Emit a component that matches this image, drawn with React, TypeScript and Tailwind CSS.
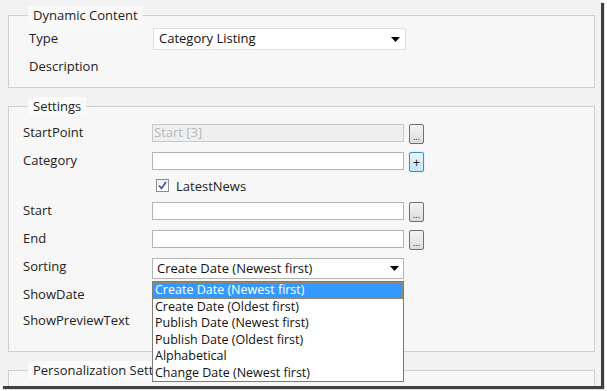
const font = "font-['Open_Sans','Liberation_Sans',sans-serif]";

const sortOptions = [
  "Create Date (Newest first)",
  "Create Date (Oldest first)",
  "Publish Date (Newest first)",
  "Publish Date (Oldest first)",
  "Alphabetical",
  "Change Date (Newest first)",
];

const Arrow = () => (
  <svg width="9" height="5" viewBox="0 0 9 5" className="shrink-0">
    <path d="M0 0h9L4.5 5z" fill="#000" />
  </svg>
);

const DotsButton = () => (
  <div className="ml-[5px] flex h-[20px] w-[15px] shrink-0 items-end justify-center rounded-[2px] border border-[#707070] bg-gradient-to-b from-[#f4f4f4] to-[#dcdcdc] pb-[2px] text-[9px] leading-none text-[#222]">
    ...
  </div>
);

const Row = ({ label, children }: { label: string; children?: React.ReactNode }) => (
  <div className="flex h-[28px] items-start">
    <div className="w-[129px] shrink-0 text-[13px] leading-[16px] text-[#222]">{label}</div>
    {children}
  </div>
);

const TextBox = ({ disabled, value }: { disabled?: boolean; value?: string }) => (
  <div
    className={
      disabled
        ? "flex h-[18px] w-[252px] items-center border border-[#c8c8c8] bg-[#efefef] px-[1px] text-[13px] text-[#b8b8b8]"
        : "h-[18px] w-[252px] border border-[#b4b4b4] bg-white"
    }
  >
    {value}
  </div>
);

const Legend = ({ children }: { children: React.ReactNode }) => (
  <legend className="ml-[19px] bg-[#fafafa] px-[5px] text-[13px] leading-[19px] text-[#222]">{children}</legend>
);

export default function App() {
  return (
    <div className={`h-[391px] w-[607px] bg-white ${font}`}>
      <div className="h-[386px] w-[601px] overflow-hidden bg-[#f2f2f2] pl-[8px] pr-[6px] pt-[6px] shadow-[3px_3px_1px_rgba(0,0,0,0.75)]">
        <fieldset className="h-[82px] border border-[#cfcfcf] bg-[#f7f7f7]">
          <Legend>Dynamic Content</Legend>
          <div className="pl-[20px]">
            <div className="mt-[5px] flex h-[28px] items-start">
              <div className="w-[124px] shrink-0 text-[13px] leading-[16px] text-[#222]">Type</div>
              <div className="-mt-[2px] flex h-[22px] w-[253px] items-center justify-between border border-[#e0e0e0] bg-white pl-[5px] pr-[5px] text-[13px] text-[#111]">
                Category Listing
                <Arrow />
              </div>
            </div>
            <div className="text-[13px] leading-[16px] text-[#222]">Description</div>
          </div>
        </fieldset>

        <fieldset className="mt-[9px] h-[255px] border border-[#cfcfcf] bg-[#f7f7f7]">
          <Legend>Settings</Legend>
          <div className="pl-[14px] pt-[8px]">
            <Row label="StartPoint">
              <TextBox disabled value="Start [3]" />
              <DotsButton />
            </Row>
            <Row label="Category">
              <TextBox />
              <div className="ml-[5px] flex h-[20px] w-[15px] shrink-0 items-center justify-center rounded-[2px] border border-[#3c8fd0] bg-gradient-to-b from-[#eaf6fd] to-[#c4e5f6] text-[13px] leading-none text-[#222] shadow-[0_0_1px_#7fc4ea]">
                +
              </div>
            </Row>
            <div className="flex h-[22px] items-start pl-[133px]">
              <div className="-mt-[1px] flex h-[13px] w-[13px] items-center justify-center border border-[#8e8f8f] bg-gradient-to-b from-[#f0f0f0] to-[#ffffff]">
                <svg width="9" height="9" viewBox="0 0 9 9">
                  <path d="M1 4.5l2.5 3L8 1" stroke="#3a4f9a" strokeWidth="1.6" fill="none" />
                </svg>
              </div>
              <span className="-mt-[2px] ml-[7px] text-[13px] leading-[16px] text-[#222]">LatestNews</span>
            </div>
            <Row label="Start">
              <TextBox />
              <DotsButton />
            </Row>
            <Row label="End">
              <TextBox />
              <DotsButton />
            </Row>
            <Row label="Sorting">
              <div className="relative">
                <div className="flex h-[21px] w-[252px] items-center justify-between border border-[#b4b4b4] bg-white pl-[4px] pr-[4px] text-[13px] text-[#111]">
                  Create Date (Newest first)
                  <Arrow />
                </div>
                <div className="absolute left-0 top-[23px] z-10 w-[252px] border border-[#7a7a7a] bg-white text-[12.5px] leading-[16.5px] text-[#111]">
                  {sortOptions.map((o, i) => (
                    <div
                      key={o}
                      className={
                        i === 0
                          ? "bg-[#3399ff] pl-[2px] text-white outline-1 -outline-offset-1 outline-dotted outline-[#9a8a70]"
                          : "pl-[2px]"
                      }
                    >
                      {o}
                    </div>
                  ))}
                </div>
              </div>
            </Row>
            <div className="h-[26px] text-[13px] leading-[16px] text-[#222]">ShowDate</div>
            <div className="text-[13px] leading-[16px] text-[#222]">ShowPreviewText</div>
          </div>
        </fieldset>

        <fieldset className="mt-[9px] h-[40px] border border-[#cfcfcf] bg-[#f7f7f7]">
          <Legend>Personalization Settings</Legend>
        </fieldset>
      </div>
    </div>
  );
}
